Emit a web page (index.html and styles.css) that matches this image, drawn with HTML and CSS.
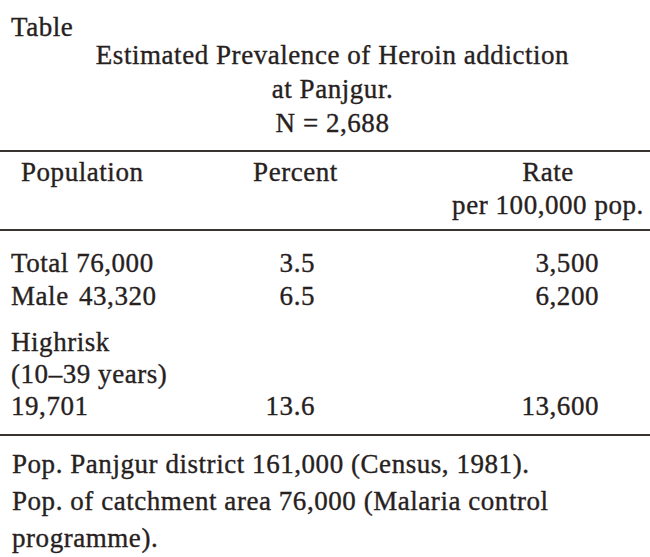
FILE: index.html
```html
<!DOCTYPE html>
<html lang="en">
<head>
<meta charset="utf-8">
<title>Estimated Prevalence of Heroin addiction at Panjgur</title>
<link rel="stylesheet" href="styles.css">
</head>
<body>
<div class="page">
  <div class="label">Table</div>
  <div class="title">
    <div>Estimated Prevalence of Heroin addiction</div>
    <div>at Panjgur.</div>
    <div>N = 2,688</div>
  </div>
  <hr class="rule rule-top">
  <div class="grid head">
    <div class="c1 hpop">Population</div>
    <div class="c2 hcenter">Percent</div>
    <div class="c3 hcenter">Rate<br>per 100,000 pop.</div>
  </div>
  <hr class="rule">
  <div class="grid body">
    <div class="c1">Total 76,000</div>
    <div class="c2 num">3.5</div>
    <div class="c3 num">3,500</div>
    <div class="c1 wide">Male 43,320</div>
    <div class="c2 num">6.5</div>
    <div class="c3 num">6,200</div>
    <div class="c1 sep">Highrisk<br>(10–39 years)<br>19,701</div>
    <div class="c2 num sep bottom">13.6</div>
    <div class="c3 num sep bottom">13,600</div>
  </div>
  <hr class="rule">
  <div class="notes">
    <p>Pop. Panjgur district 161,000 (Census, 1981).</p>
    <p>Pop. of catchment area 76,000 (Malaria control programme).</p>
  </div>
</div>
</body>
</html>
```
FILE: styles.css
```css
html, body {
  margin: 0;
  padding: 0;
  background: #ffffff;
}

.page {
  width: 650px;
  font-family: "Liberation Serif", "Times New Roman", serif;
  font-size: 27px;
  letter-spacing: 0.55px;
  color: #27211e;
  -webkit-text-stroke: 0.35px #27211e;
}

.label {
  padding: 16px 0 0 11px;
  line-height: 22px;
}

.title {
  padding-left: 15px;
  text-align: center;
  line-height: 34px;
}

.rule {
  margin: 0;
  border: 0;
  height: 2px;
  background: #3a3431;
}

.rule-top {
  margin-top: 10px;
}

.grid {
  display: grid;
  grid-template-columns: 200px 169px 270px;
  padding-left: 11px;
  line-height: 33px;
}

.head {
  padding-top: 4px;
  padding-bottom: 7px;
}

.hpop {
  padding-left: 10px;
}

.hcenter {
  text-align: center;
}

.head .c3 {
  padding-left: 66px;
}

.body {
  padding-top: 16px;
  padding-bottom: 12px;
}

.body .c2 {
  text-align: right;
  padding-right: 65px;
}

.body .c3 {
  text-align: right;
  padding-right: 51px;
}

.wide {
  word-spacing: 3px;
}

.sep {
  margin-top: 13px;
  line-height: 32px;
}

.bottom {
  align-self: end;
}

.notes {
  padding: 10px 0 0 12px;
  line-height: 37px;
  width: 560px;
}

.notes p {
  margin: 0;
}
```
